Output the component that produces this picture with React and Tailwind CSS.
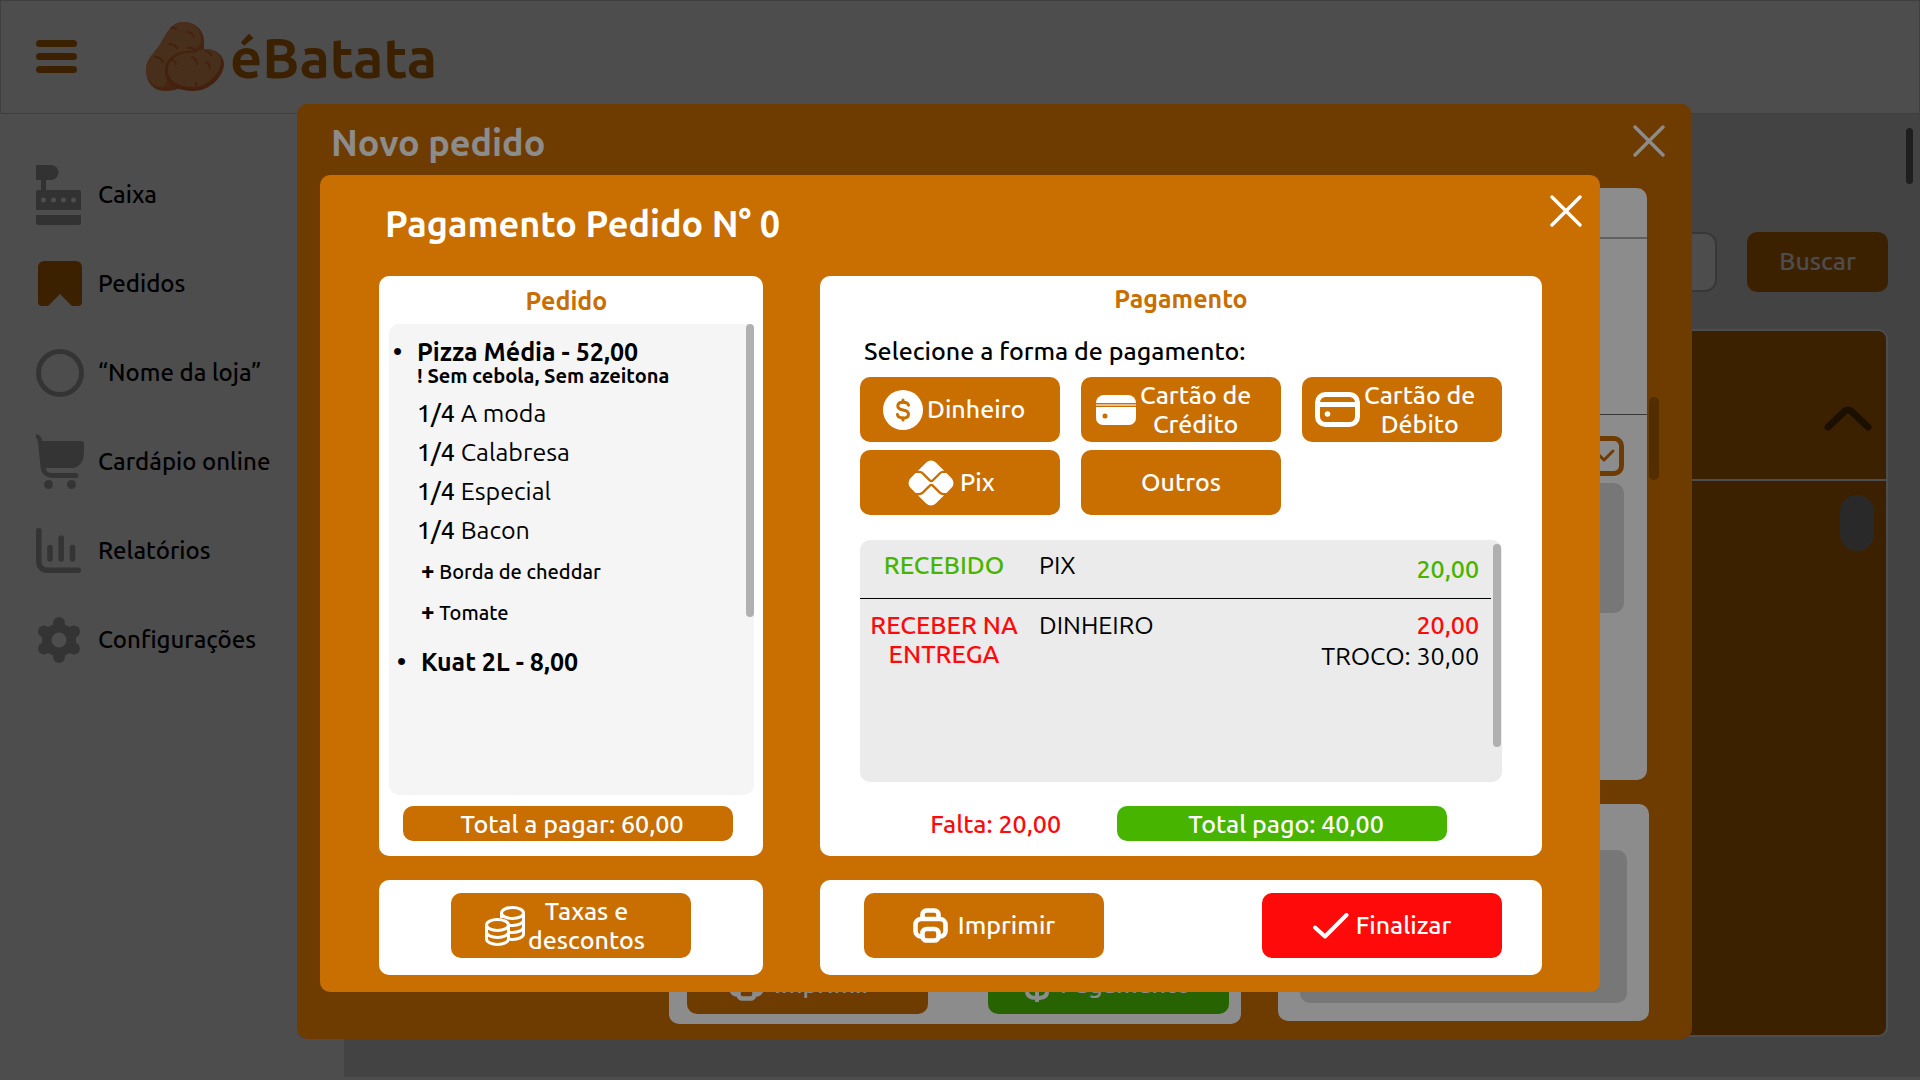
import React from "react";
import { MdPix } from "react-icons/md";

/* ---------- icons ---------- */

function PotatoLogo() {
  return (
    <svg width="78" height="69" viewBox="0 0 78 69" aria-hidden="true">
      <path d="M38 0C49 0 58 8 58 19C58 25 58 28 59 32L40 62C33 68 26 69 19 69C7 69 0 60 0 48C0 38 7 32 13 24C20 14 24 0 38 0Z" fill="#e57a3a" />
      <path d="M37 0C48 0 55 8 55 18C55 24 50 28 42 30C30 33 21 40 21 51C21 58 22 62 17 65C7 65 0 58 0 47C0 38 7 32 13 24C20 14 24 0 37 0Z" fill="#f19f60" />
      <path d="M58 27C69 26 78 33 78 42C78 54 64 69 48 69C34 69 19 64 19 49C19 36 31 29 42 29C49 29 52 28 58 27Z" fill="#e07030" />
      <path d="M58 27C69 26 76 33 75 41C73 52 62 65 47 65C34 65 22 60 22 48C22 38 32 31 42 31C49 31 52 28 58 27Z" fill="#f19f60" />
      <g fill="none" stroke="#e07030" strokeWidth="2" strokeLinecap="round">
        <path d="M25 6q3-1 5 1M42 10q5 1 6 5M23 22q6 0 8 4M9 35q6 0 8 5M24 37q5 1 6 5M42 26q5-1 7 2M46 35q5 2 5 7M60 40q4 2 4 6M60 29q4 1 5 4M50 61v3" />
      </g>
    </svg>
  );
}

function RegisterIcon() {
  return (
    <svg width="45" height="60" viewBox="0 0 45 60" fill="#a6a6a6" aria-hidden="true">
      <path d="M0 0h15a7.500 7.500 0 0 1 0 15H0z" />
      <path d="M5 14h5v12H5z" />
      <path fillRule="evenodd" d="M2 25h41a2 2 0 0 1 2 2v18H0V27a2 2 0 0 1 2-2zM7.500 32.500a2.500 2.500 0 1 0 0 5a2.500 2.500 0 1 0 0-5zm10 0a2.500 2.500 0 1 0 0 5a2.500 2.500 0 1 0 0-5zm10 0a2.500 2.500 0 1 0 0 5a2.500 2.500 0 1 0 0-5zm10 0a2.500 2.500 0 1 0 0 5a2.500 2.500 0 1 0 0-5z" />
      <path d="M0 50h45v8a2 2 0 0 1-2 2H2a2 2 0 0 1-2-2z" />
    </svg>
  );
}

function BookmarkIcon() {
  return (
    <svg width="48" height="45" viewBox="-2 0 48 45" fill="#c96e00" aria-hidden="true">
      <path d="M6 0h32a6 6 0 0 1 6 6v35a4 4 0 0 1-4 4h-6L22 33L10 45H4a4 4 0 0 1-4-4V6a6 6 0 0 1 6-6z" />
    </svg>
  );
}

function RingIcon() {
  return (
    <svg width="48" height="48" viewBox="0 0 48 48" fill="none" stroke="#b0b0b0" strokeWidth="5" aria-hidden="true">
      <circle cx="24" cy="24" r="21.500" />
    </svg>
  );
}

function CartIcon() {
  return (
    <svg width="48" height="55" viewBox="0 0 48 55" fill="#b0b0b0" aria-hidden="true">
      <path d="M0 0C4 1 6 4 6.500 7H45a3 3 0 0 1 3 3v8C48 28 43 34 36 34H10C10 37 12 39 16 39H40a2.500 2.500 0 0 1 0 5H17C10 44 5 40 4.500 33L2 8C2 6 1 5 0 4z" />
      <circle cx="12.500" cy="50.500" r="4.500" />
      <circle cx="35.500" cy="50.500" r="4.500" />
    </svg>
  );
}

function ReportIcon() {
  return (
    <svg width="45" height="45" viewBox="0 0 45 45" fill="none" stroke="#b0b0b0" strokeWidth="5.600" strokeLinecap="round" aria-hidden="true">
      <path d="M2.800 2.800V34a8 8 0 0 0 8 8.200H42.200" />
      <path d="M14 19.500v11.500M25.200 10v21M36.500 19.500v11.500" />
    </svg>
  );
}

function GearIcon() {
  return (
    <svg width="44" height="46" viewBox="-2 0 44 46" fill="#b0b0b0" aria-hidden="true">
      <circle cx="21" cy="6" r="6" />
      <circle cx="6" cy="14.500" r="6" />
      <circle cx="36" cy="14.500" r="6" />
      <circle cx="6" cy="31.500" r="6" />
      <circle cx="36" cy="31.500" r="6" />
      <circle cx="21" cy="40" r="6" />
      <path fillRule="evenodd" d="M16 7L26 7L38 13L38 33L26 39L16 39L4 33L4 13ZM21 15.500a7.500 7.500 0 1 0 0 15a7.500 7.500 0 1 0 0-15z" />
    </svg>
  );
}

function CloseIcon() {
  return (
    <svg width="32" height="32" viewBox="0 0 32 32" fill="none" stroke="#ffffff" strokeWidth="3.400" strokeLinecap="round" aria-hidden="true">
      <path d="M2 2L30 30M30 2L2 30" />
    </svg>
  );
}

function DollarIcon() {
  return (
    <svg width="40" height="40" viewBox="0 0 40 40" aria-hidden="true">
      <circle cx="20" cy="20" r="20" fill="#ffffff" />
      <g fill="none" stroke="#c96e00" strokeWidth="3" strokeLinecap="round">
        <path d="M25.500 15.200C25 13.200 23 12.200 20 12.200C16.800 12.200 14.800 13.800 14.800 16C14.800 18.600 17 19.400 20 20C23.200 20.600 25.500 21.600 25.500 24.200C25.500 26.600 23.200 28 20 28C16.800 28 14.800 26.800 14.400 24.600" />
        <path d="M20 10v2M20 28v2" />
      </g>
    </svg>
  );
}

function CreditIcon() {
  return (
    <svg width="40" height="30" viewBox="0 0 40 30" fill="#ffffff" aria-hidden="true">
      <path d="M8 0h24a8 8 0 0 1 8 8H0a8 8 0 0 1 8-8z" />
      <path d="M0 9h40v2H0z" opacity="0.550" />
      <path fillRule="evenodd" d="M0 12h40v11a7 7 0 0 1-7 7H7a7 7 0 0 1-7-7zM9 18.500a2.500 2.500 0 1 0 0 5a2.500 2.500 0 1 0 0-5z" />
    </svg>
  );
}

function DebitIcon() {
  return (
    <svg width="45" height="35" viewBox="0 0 45 35" fill="none" stroke="#ffffff" strokeWidth="5" aria-hidden="true">
      <rect x="2.500" y="2.500" width="40" height="30" rx="8" />
      <path d="M3 12.500h39" />
      <circle cx="12.500" cy="22" r="2.800" fill="#ffffff" stroke="none" />
    </svg>
  );
}

function CoinsIcon() {
  return (
    <svg width="40" height="40" viewBox="0 0 40 40" fill="none" stroke="#ffffff" strokeWidth="3" aria-hidden="true">
      <ellipse cx="27.500" cy="7" rx="11" ry="5.500" />
      <path d="M16.500 7v5M38.500 7v21c0 3-5 5.500-11 5.500l-3-.2M38.500 14c0 3-5 5.500-11 5.500h-3M38.500 21c0 3-5 5.500-11 5.500h-3" />
      <ellipse cx="12.500" cy="19" rx="11" ry="5.500" />
      <path d="M1.500 19v14c0 3 5 5.500 11 5.500s11-2.500 11-5.500V19M1.500 26c0 3 5 5.500 11 5.500s11-2.500 11-5.500" />
    </svg>
  );
}

function PrinterIcon() {
  return (
    <svg width="35" height="35" viewBox="0 0 35 35" fill="none" stroke="#ffffff" strokeWidth="4.600" strokeLinejoin="round" aria-hidden="true">
      <path d="M9.500 10.500V6.500a4 4 0 0 1 4-4h8a4 4 0 0 1 4 4v4" />
      <path d="M9 28.500H8A5.500 5.500 0 0 1 2.500 23v-6.500A5.500 5.500 0 0 1 8 11h19a5.500 5.500 0 0 1 5.500 5.500V23a5.500 5.500 0 0 1-5.500 5.500h-1" />
      <rect x="9.500" y="21" width="16" height="11.500" rx="4" />
    </svg>
  );
}

function CheckIcon() {
  return (
    <svg width="36" height="26" viewBox="0 0 36 26" fill="none" stroke="#ffffff" strokeWidth="4" strokeLinecap="round" strokeLinejoin="round" aria-hidden="true">
      <path d="M2 14.500L12 23.500L33.500 2" />
    </svg>
  );
}

/* ---------- background page ---------- */

const MENU = [
  { label: "Caixa", Icon: RegisterIcon },
  { label: "Pedidos", Icon: BookmarkIcon },
  { label: "“Nome da loja”", Icon: RingIcon },
  { label: "Cardápio online", Icon: CartIcon },
  { label: "Relatórios", Icon: ReportIcon },
  { label: "Configurações", Icon: GearIcon },
];

function Header() {
  return (
    <header className="flex h-[114px] items-center border border-[#d2d2d2] bg-white pb-0.5 pl-[35px]">
      <button type="button" aria-label="Menu" className="flex w-[41px] flex-col gap-[6px]">
        <span className="h-[7px] rounded-full bg-[#c96e00]" />
        <span className="h-[7px] rounded-full bg-[#c96e00]" />
        <span className="h-[7px] rounded-full bg-[#c96e00]" />
      </button>
      <a href="#inicio" className="ml-[69px] flex items-center gap-[6px]">
        <PotatoLogo />
        <span className="pt-1 text-[56px] leading-[60px] font-bold text-[#c96e00]">éBatata</span>
      </a>
    </header>
  );
}

function Sidebar() {
  return (
    <nav className="w-[344px] shrink-0 bg-white pt-9 pl-9">
      <ul>
        {MENU.map(({ label, Icon }) => (
          <li key={label}>
            <a href="#menu" className="flex h-[89px] items-center gap-[14px] text-2xl font-medium text-black">
              <span className="w-12">
                <Icon />
              </span>
              {label}
            </a>
          </li>
        ))}
      </ul>
    </nav>
  );
}

function OrdersPage() {
  return (
    <main className="flex flex-1 gap-[18px] bg-[#e1e1e1] pr-[7px] pl-8">
      <div className="flex flex-1 flex-col pt-[118px] pb-10">
        <form className="flex gap-[30px]">
          <input aria-label="Buscar pedido" className="h-[60px] min-w-0 flex-1 rounded-xl border-2 border-[#b8b8b8] bg-white px-4" />
          <button type="button" className="h-[60px] w-[141px] rounded-[10px] bg-[#c96e00] font-medium text-white">
            Buscar
          </button>
        </form>
        <section className="mt-[37px] flex flex-1 flex-col rounded-[10px] border-2 border-white bg-[#c96e00]">
          <div className="flex h-[150px] items-end justify-end border-b-2 border-white pr-[14px] pb-12">
            <svg width="48" height="25" viewBox="0 0 48 25" fill="none" stroke="#5c3300" strokeWidth="7" strokeLinecap="round" strokeLinejoin="round" aria-hidden="true">
              <path d="M4 21L21 5Q24 3 27 5L44 21" />
            </svg>
          </div>
          <div className="flex justify-end pt-[14px] pr-3">
            <span className="h-14 w-[34px] rounded-full bg-[#8a8a8e]" />
          </div>
        </section>
      </div>
      <div className="mt-[14px] h-14 w-[7px] rounded-full bg-[#666666]" />
    </main>
  );
}

/* ---------- dialog: new order ---------- */

function NewOrderDialog() {
  return (
    <div className="absolute inset-0 bg-black/45 pt-[104px] pr-[228px] pb-[41px] pl-[297px]">
      <section aria-label="Novo pedido" className="flex h-full flex-col rounded-[10px] bg-[#c96e00] pb-[18px]">
        <div className="flex h-[84px] items-center justify-between pr-[27px] pb-[10px] pl-[34px]">
          <h2 className="pt-1 text-[36px] leading-10 font-bold text-white">Novo pedido</h2>
          <button type="button" aria-label="Fechar novo pedido">
            <CloseIcon />
          </button>
        </div>
        <div className="flex h-[592px] gap-[2px] pr-[33px] pl-[34px]">
          <div className="flex flex-1 flex-col rounded-[10px] bg-white">
            <div className="h-[51px] border-b-2 border-[#b0b0b0]" />
            <div className="h-[176px] border-b border-[#666666]" />
            <div className="flex flex-col items-end gap-[7px] pt-[21px] pr-[23px]">
              <button type="button" aria-label="Expandir" className="flex h-10 w-10 items-center justify-center rounded-[10px] border-[5px] border-[#c96e00]">
                <svg width="22" height="14" viewBox="0 0 22 14" fill="none" stroke="#c96e00" strokeWidth="3" strokeLinecap="round" strokeLinejoin="round" aria-hidden="true">
                  <path d="M2 2L11 11L20 2" />
                </svg>
              </button>
              <div className="h-[130px] w-[326px] rounded-[10px] bg-[#d9d9d9]" />
            </div>
          </div>
          <div className="mt-[209px] h-[83px] w-[10px] rounded-full bg-[#965300]" />
        </div>
        <div className="mt-6 flex flex-1 justify-end gap-[37px] pr-[43px]">
          <div className="mb-[-3px] flex w-[572px] items-end gap-[60px] rounded-[10px] bg-white pb-[10px] pl-[18px]">
            <button type="button" className="flex h-[65px] w-[241px] items-center gap-[10px] rounded-[10px] bg-[#c96e00] pt-1 pl-[42px] font-medium text-white">
              <PrinterIcon />
              <span className="pt-0.5">Imprimir</span>
            </button>
            <button type="button" className="flex h-[65px] w-[241px] items-center gap-[3px] rounded-[10px] bg-[#47b500] pt-1 pl-[29px] font-medium text-white">
              <svg width="40" height="36" viewBox="0 0 40 36" fill="none" stroke="#ffffff" strokeWidth="4" strokeLinecap="round" aria-hidden="true">
                <path d="M30 12C29 7 25 5 20 5C14 5 10 8 10 12C10 17 15 18 20 19C26 20 30 21 30 26C30 30 26 32 20 32C14 32 10 30 10 25M20 1v34" />
              </svg>
              <span className="pt-0.5">Pagamento</span>
            </button>
          </div>
          <div className="w-[371px] rounded-[10px] bg-white px-[22px] pt-[46px] pb-[18px]">
            <div className="h-full rounded-[10px] bg-[#d9d9d9]" />
          </div>
        </div>
      </section>
    </div>
  );
}

/* ---------- dialog: payment ---------- */

const FLAVORS = ["A moda", "Calabresa", "Especial", "Bacon"];
const EXTRAS = ["Borda de cheddar", "Tomate"];

function OrderPanel() {
  return (
    <section className="flex flex-col rounded-[10px] bg-white pr-[9px] pb-[15px] pl-[10px]">
      <h3 className="h-12 pt-[11px] pr-[10px] text-center leading-7 font-bold text-[#c96e00]">Pedido</h3>
      <div className="flex flex-1 justify-between rounded-[10px] bg-[#f5f5f5]">
        <ul className="pt-3 pl-1">
          <li className="flex">
            <span className="w-6 leading-8 font-bold">•</span>
            <div>
              <p className="leading-8 font-bold">Pizza Média - 52,00</p>
              <p className="text-[20px] leading-4 font-bold">! Sem cebola, Sem azeitona</p>
              <ul className="pt-[10px]">
                {FLAVORS.map((flavor) => (
                  <li key={flavor} className="leading-[39px]">
                    <span className="font-medium">1/4</span> {flavor}
                  </li>
                ))}
              </ul>
              <ul className="pt-px pl-1">
                {EXTRAS.map((extra) => (
                  <li key={extra} className="text-[20px] leading-[41px] font-medium">
                    <span className="text-2xl font-bold">+</span> {extra}
                  </li>
                ))}
              </ul>
            </div>
          </li>
          <li className="flex pt-[13px] pl-1 leading-8 font-bold">
            <span className="w-6">•</span>
            Kuat 2L - 8,00
          </li>
        </ul>
        <span className="h-[293px] w-2 rounded-full bg-[#b0b0b0]" />
      </div>
      <p className="mt-[11px] mr-[21px] ml-[14px] h-[35px] rounded-[10px] bg-[#c96e00] pl-2 text-center leading-9 font-medium text-white">
        Total a pagar: 60,00
      </p>
    </section>
  );
}

function PaymentPanel() {
  const method = "flex h-[65px] items-center rounded-[10px] bg-[#c96e00] text-center leading-[29px] font-medium text-white";
  return (
    <section className="flex flex-col rounded-[10px] bg-white px-10 pb-[15px]">
      <h3 className="h-[60px] pt-[9px] text-center leading-7 font-bold text-[#c96e00]">Pagamento</h3>
      <p className="h-[41px] pl-1 leading-[30px] font-medium">Selecione a forma de pagamento:</p>
      <div className="grid grid-cols-3 gap-x-[21px] gap-y-2">
        <button type="button" className={`${method} gap-1 pl-[23px]`}>
          <DollarIcon />
          Dinheiro
        </button>
        <button type="button" className={`${method} gap-1 pl-[15px]`}>
          <CreditIcon />
          <span>Cartão de<br />Crédito</span>
        </button>
        <button type="button" className={`${method} gap-1 pl-[13px]`}>
          <DebitIcon />
          <span>Cartão de<br />Débito</span>
        </button>
        <button type="button" className={`${method} gap-[6px] pl-12`}>
          <MdPix size={54} className="-m-1" aria-hidden="true" />
          Pix
        </button>
        <button type="button" className={`${method} justify-center`}>Outros</button>
      </div>
      <div className="mt-[25px] flex flex-1 gap-[2px] rounded-[10px] bg-[#ebebeb] pr-px">
        <div className="flex-1">
          <table className="w-full">
            <tbody className="align-top leading-[29px]">
              <tr className="h-[58px] border-b border-black">
                <td className="w-[168px] pt-[11px] text-center font-medium text-[#47b500]">RECEBIDO</td>
                <td className="pt-[11px] pl-[11px]">PIX</td>
                <td className="pt-[15px] pr-3 text-right font-medium text-[#47b500]">20,00</td>
              </tr>
              <tr>
                <td className="pt-3 text-center font-medium text-[#ff0a0a]">RECEBER NA<br />ENTREGA</td>
                <td className="pt-3 pl-[11px]">DINHEIRO</td>
                <td className="pt-[11px] pr-3 text-right leading-[31px]">
                  <span className="font-medium text-[#ff0a0a]">20,00</span>
                  <br />
                  TROCO: 30,00
                </td>
              </tr>
            </tbody>
          </table>
        </div>
        <span className="mt-1 h-[203px] w-2 rounded-full bg-[#b0b0b0]" />
      </div>
      <div className="mt-6 flex items-center justify-end pr-[55px] leading-9 font-medium">
        <p className="mr-14 h-[35px] text-[#ff0a0a]">Falta: 20,00</p>
        <p className="h-[35px] w-[330px] rounded-[10px] bg-[#47b500] pl-2 text-center text-white">Total pago: 40,00</p>
      </div>
    </section>
  );
}

function PaymentDialog() {
  return (
    <div className="absolute inset-0 bg-black/45 px-80 pt-[175px] pb-[88px]">
      <section aria-label="Pagamento" className="flex h-full flex-col rounded-[10px] bg-[#c96e00] pb-[17px]">
        <div className="flex h-[101px] items-start justify-between pt-5 pr-[18px] pl-[65px]">
          <h2 className="pt-[9px] text-[36px] leading-10 font-bold text-white">Pagamento Pedido N° 0</h2>
          <button type="button" aria-label="Fechar pagamento">
            <CloseIcon />
          </button>
        </div>
        <div className="grid flex-1 grid-cols-[384fr_722fr] grid-rows-[1fr_95px] gap-x-[57px] gap-y-6 pr-[58px] pl-[59px]">
          <OrderPanel />
          <PaymentPanel />
          <div className="flex items-start justify-center rounded-[10px] bg-white pt-[13px]">
            <button type="button" className="flex h-[65px] w-[240px] items-center gap-[3px] rounded-[10px] bg-[#c96e00] pl-[34px] text-center leading-[29px] font-medium text-white">
              <CoinsIcon />
              <span>Taxas e<br />descontos</span>
            </button>
          </div>
          <div className="flex items-start justify-between rounded-[10px] bg-white pt-[13px] pr-10 pl-11">
            <button type="button" className="flex h-[65px] w-[240px] items-center justify-center gap-[10px] rounded-[10px] bg-[#c96e00] font-medium text-white">
              <PrinterIcon />
              Imprimir
            </button>
            <button type="button" className="flex h-[65px] w-[240px] items-center justify-center gap-[7px] rounded-[10px] bg-[#ff0a0a] font-medium text-white">
              <CheckIcon />
              Finalizar
            </button>
          </div>
        </div>
      </section>
    </div>
  );
}

export default function App() {
  return (
    <div className="relative flex min-h-screen flex-col bg-white pb-[3px] font-['Ubuntu','Noto_Sans',sans-serif] text-[25px] text-black">
      <Header />
      <div className="flex flex-1">
        <Sidebar />
        <OrdersPage />
      </div>
      <NewOrderDialog />
      <PaymentDialog />
    </div>
  );
}
